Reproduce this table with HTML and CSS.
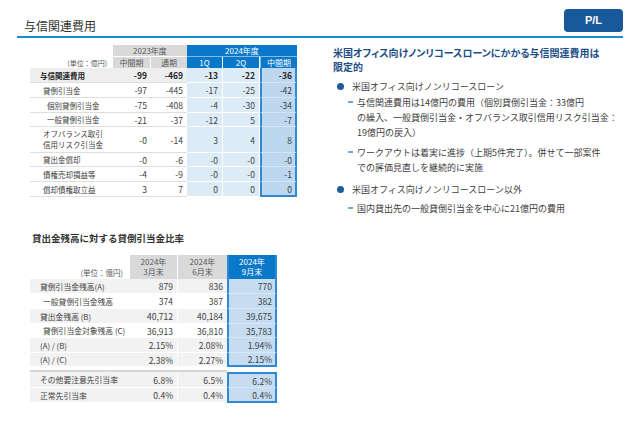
FILE: index.html
```html
<!DOCTYPE html>
<html lang="ja">
<head>
<meta charset="utf-8">
<title>与信関連費用</title>
<link rel="stylesheet" href="styles.css">
</head>
<body>
<div class="page">
  <header class="top">
    <h1 class="title">与信関連費用</h1>
    <div class="badge">P/L</div>
  </header>
  <main class="main">
    <section class="left">
      <div class="t1">
        <div class="row">
          <div class="c"></div>
          <div class="c hg1">2023年度</div>
          <div class="c hb1">2024年度</div>
        </div>
        <div class="row">
          <div class="c unit">(単位：億円)</div>
          <div class="c hg2 sep">中間期</div>
          <div class="c hg2">通期</div>
          <div class="c hb2 sep">1Q</div>
          <div class="c hb2 sep">2Q</div>
          <div class="c hb2 hm">中間期</div>
        </div>
        <div class="row bold">
          <div class="c lab l0">与信関連費用</div>
          <div class="c n">-99</div><div class="c n">-469</div>
          <div class="c q">-13</div><div class="c q">-22</div><div class="c m">-36</div>
        </div>
        <div class="row">
          <div class="c lab">貸倒引当金</div>
          <div class="c n">-97</div><div class="c n">-445</div>
          <div class="c q">-17</div><div class="c q">-25</div><div class="c m">-42</div>
        </div>
        <div class="row">
          <div class="c lab l2">個別貸倒引当金</div>
          <div class="c n">-75</div><div class="c n">-408</div>
          <div class="c q">-4</div><div class="c q">-30</div><div class="c m">-34</div>
        </div>
        <div class="row">
          <div class="c lab l2">一般貸倒引当金</div>
          <div class="c n">-21</div><div class="c n">-37</div>
          <div class="c q">-12</div><div class="c q">5</div><div class="c m">-7</div>
        </div>
        <div class="row">
          <div class="c lab two">オフバランス取引<br>信用リスク引当金</div>
          <div class="c n">-0</div><div class="c n">-14</div>
          <div class="c q">3</div><div class="c q">4</div><div class="c m">8</div>
        </div>
        <div class="row">
          <div class="c lab">貸出金償却</div>
          <div class="c n">-0</div><div class="c n">-6</div>
          <div class="c q">-0</div><div class="c q">-0</div><div class="c m">-0</div>
        </div>
        <div class="row">
          <div class="c lab">債権売却損益等</div>
          <div class="c n">-4</div><div class="c n">-9</div>
          <div class="c q">-0</div><div class="c q">-0</div><div class="c m">-1</div>
        </div>
        <div class="row last">
          <div class="c lab">償却債権取立益</div>
          <div class="c n">3</div><div class="c n">7</div>
          <div class="c q">0</div><div class="c q">0</div><div class="c m">0</div>
        </div>
      </div>

      <h2 class="sub-title">貸出金残高に対する貸倒引当金比率</h2>

      <div class="t2">
        <div class="row">
          <div class="c unit2">(単位：億円)</div>
          <div class="c hg sep">2024年<br>3月末</div>
          <div class="c hg">2024年<br>6月末</div>
          <div class="c hb">2024年<br>9月末</div>
        </div>
        <div class="row gr">
          <div class="c lab2">貸倒引当金残高(A)</div>
          <div class="c n2 sep">879</div><div class="c n2">836</div><div class="c m2">770</div>
        </div>
        <div class="row">
          <div class="c lab2 i">一般貸倒引当金残高</div>
          <div class="c n2 sep">374</div><div class="c n2">387</div><div class="c m2">382</div>
        </div>
        <div class="row gr">
          <div class="c lab2">貸出金残高 (B)</div>
          <div class="c n2 sep">40,712</div><div class="c n2">40,184</div><div class="c m2">39,675</div>
        </div>
        <div class="row">
          <div class="c lab2 i">貸倒引当金対象残高 (C)</div>
          <div class="c n2 sep">36,913</div><div class="c n2">36,810</div><div class="c m2">35,783</div>
        </div>
        <div class="row gr">
          <div class="c lab2">(A) / (B)</div>
          <div class="c n2 sep">2.15%</div><div class="c n2">2.08%</div><div class="c m2">1.94%</div>
        </div>
        <div class="row gr endbox">
          <div class="c lab2">(A) / (C)</div>
          <div class="c n2 sep">2.38%</div><div class="c n2">2.27%</div><div class="c m2">2.15%</div>
        </div>
        <div class="row gap">
          <div class="c g"></div><div class="c g"></div><div class="c g"></div><div class="c"></div>
        </div>
        <div class="row gr startbox">
          <div class="c lab2">その他要注意先引当率</div>
          <div class="c n2 sep">6.8%</div><div class="c n2">6.5%</div><div class="c m2">6.2%</div>
        </div>
        <div class="row gr endbox">
          <div class="c lab2">正常先引当率</div>
          <div class="c n2 sep">0.4%</div><div class="c n2">0.4%</div><div class="c m2">0.4%</div>
        </div>
      </div>
    </section>

    <section class="notes">
      <h2 class="lead">米国オフィス向けノンリコースローンにかかる与信関連費用は<br>限定的</h2>
      <div class="b1"><span class="dot"></span><p>米国オフィス向けノンリコースローン</p></div>
      <div class="b2 first"><span class="dash"></span><p>与信関連費用は14億円の費用（個別貸倒引当金：33億円<br>の繰入、一般貸倒引当金・オフバランス取引信用リスク引当金：<br>19億円の戻入）</p></div>
      <div class="b2 second"><span class="dash"></span><p>ワークアウトは着実に進捗（上期5件完了）。併せて一部案件<br>での評価見直しを継続的に実施</p></div>
      <div class="b1 third"><span class="dot"></span><p>米国オフィス向けノンリコースローン以外</p></div>
      <div class="b2 fourth"><span class="dash"></span><p>国内貸出先の一般貸倒引当金を中心に21億円の費用</p></div>
    </section>
  </main>
</div>
</body>
</html>
```

FILE: styles.css
```css
html, body {
  margin: 0;
  padding: 0;
  background: #ffffff;
}

body {
  font-family: "Noto Sans CJK JP", "Noto Sans", sans-serif;
  color: #404040;
}

.page {
  width: 640px;
  height: 443px;
  overflow: hidden;
}

/* header */
.top {
  display: flex;
  justify-content: space-between;
  margin: 0 17px;
  height: 36px;
  border-bottom: 2px solid #1c8bd6;
}

.title {
  margin: 0;
  padding: 17px 0 0 7px;
  font-size: 12px;
  line-height: 17px;
  font-weight: normal;
  color: #333333;
}

.badge {
  margin-top: 9px;
  width: 59px;
  height: 23px;
  border-radius: 4px;
  background: #17599a;
  color: #ffffff;
  font-family: "Liberation Sans", Arial, sans-serif;
  font-weight: bold;
  font-size: 11px;
  line-height: 23px;
  text-align: center;
}

/* main layout */
.main {
  display: flex;
  padding-left: 30px;
}

.left {
  width: 267px;
  padding-top: 7px;
}

.row {
  display: contents;
}

.c {
  display: flex;
  align-items: center;
  box-sizing: border-box;
  white-space: nowrap;
}

/* table 1 */
.t1 {
  display: grid;
  grid-template-columns: 83px 38px 36px 36px 37px 37px;
  grid-template-rows: 12px 11px 15px 15px 15px 14px 26px 14px 15px 15px;
  font-size: 8.5px;
}

.hg1 {
  grid-column: span 2;
  justify-content: center;
  background: #d9d9d9;
  color: #595959;
  border-bottom: 1px solid #ffffff;
  font-size: 8px;
}

.hb1 {
  grid-column: span 3;
  justify-content: center;
  background: #0a78c9;
  color: #ffffff;
  border-bottom: 1px solid #7fbbe6;
  font-size: 8px;
}

.unit {
  justify-content: flex-end;
  padding-right: 6px;
  font-size: 7px;
  color: #595959;
}

.hg2 {
  justify-content: center;
  background: #d9d9d9;
  color: #595959;
  font-size: 8px;
}

.hb2 {
  justify-content: center;
  background: #0a78c9;
  color: #ffffff;
  font-size: 8px;
}

.hb2.hm {
  border-left: 1px solid #7fbbe6;
}

.sep {
  border-right: 1px solid #ffffff;
}

.lab {
  padding-left: 13px;
  border-bottom: 1px solid #dedede;
  font-size: 7.5px;
}

.lab.l0 {
  padding-left: 10px;
}

.lab.l2 {
  padding-left: 17px;
}

.lab.two {
  line-height: 10.5px;
  white-space: normal;
}

.n {
  justify-content: flex-end;
  padding-right: 4px;
  border-bottom: 1px solid #dedede;
}

.q {
  justify-content: flex-end;
  padding-right: 4px;
  background: #ddebf7;
  border-bottom: 1px solid #ffffff;
  border-right: 1px solid #ffffff;
}

.m {
  justify-content: flex-end;
  padding-right: 3px;
  background: #bdd7ee;
  border-left: 2px solid #2e89d5;
  border-right: 2px solid #2e89d5;
  border-bottom: 1px solid #d3e4f4;
}

.last .m {
  border-bottom: 2px solid #2e89d5;
}

.bold .c {
  font-weight: bold;
  color: #262626;
}

.bold .lab,
.bold .n {
  background: #eeeeee;
}

/* section title */
.sub-title {
  margin: 34px 0 0 2px;
  font-size: 9.5px;
  line-height: 14px;
  font-weight: bold;
  color: #333333;
}

/* table 2 */
.t2 {
  margin-top: 10px;
  display: grid;
  grid-template-columns: 100px 48px 49px 50px;
  grid-template-rows: 24px 15px 15px 15px 14px 15px 14px 5px 16px 15px;
  font-size: 8.5px;
}

.unit2 {
  align-items: flex-end;
  justify-content: flex-end;
  padding: 0 7px 1px 0;
  font-size: 7.5px;
  color: #595959;
}

.hg,
.hb {
  flex-direction: column;
  justify-content: center;
  text-align: center;
  line-height: 10px;
  font-size: 8px;
}

.hg {
  background: #d9d9d9;
  color: #595959;
}

.hb {
  background: #0a78c9;
  color: #ffffff;
  border-left: 2px solid #2e89d5;
  border-right: 2px solid #2e89d5;
}

.lab2 {
  padding-left: 10px;
  border-bottom: 1px solid #ffffff;
  font-size: 7.8px;
}

.lab2.i {
  padding-left: 13px;
}

.n2 {
  justify-content: flex-end;
  padding-right: 4px;
  border-bottom: 1px solid #ffffff;
}

.m2 {
  justify-content: flex-end;
  padding-right: 3px;
  background: #c5dcf1;
  border-left: 2px solid #2e89d5;
  border-right: 2px solid #2e89d5;
  border-bottom: 1px solid #d8e7f5;
}

.gr .lab2,
.gr .n2 {
  background: #f2f2f2;
}

.endbox .m2 {
  border-bottom: 2px solid #2e89d5;
}

.startbox .m2 {
  border-top: 2px solid #2e89d5;
}

.gap .g {
  border-bottom: 2px solid #d6d6d6;
}

/* right notes */
.notes {
  margin-left: 36px;
  padding-top: 8px;
  width: 280px;
}

.lead {
  margin: 0;
  font-size: 10px;
  line-height: 14px;
  font-weight: bold;
  color: #1d4f86;
  white-space: nowrap;
  font-feature-settings: "palt";
}

.notes p {
  margin: 0;
  font-size: 9px;
  line-height: 15px;
  white-space: nowrap;
}

.b1 {
  display: flex;
  align-items: center;
  margin-top: 5px;
  padding-left: 4px;
}

.dot {
  width: 7px;
  height: 7px;
  border-radius: 50%;
  background: #1d5c99;
  margin-right: 8px;
  flex: none;
}

.b2 {
  display: flex;
  align-items: flex-start;
  padding-left: 15px;
  margin-top: 1px;
}

.dash {
  width: 5px;
  height: 1.5px;
  background: #6ba6de;
  margin: 6px 4px 0 0;
  flex: none;
}

.b2.second {
  margin-top: 5px;
}

.b1.third {
  margin-top: 7px;
}

.b2.fourth {
  margin-top: 4px;
}
```
